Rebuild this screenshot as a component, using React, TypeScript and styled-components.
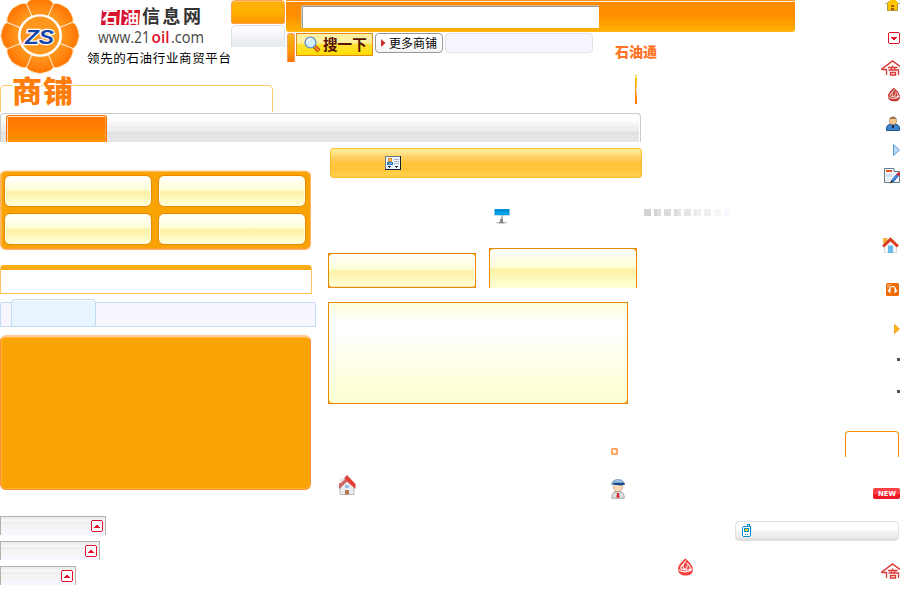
import React from "react";
import styled, { createGlobalStyle, css } from "styled-components";

const Global = createGlobalStyle`
  * { box-sizing: border-box; }
  body { margin: 0; background: #fff; font-family: "Noto Sans CJK SC", sans-serif; }
`;

const cjk = '"Noto Sans CJK SC", sans-serif';

/* ---------- page frame ---------- */
const Page = styled.div`
  width: 900px;
  height: 600px;
  overflow: hidden;
  display: flex;
  flex-direction: column;
  background: #fff;
`;
const Top = styled.header`
  display: flex;
  height: 142px;
  flex: none;
`;
const TopMain = styled.div`
  width: 800px;
  display: flex;
  flex-direction: column;
`;
const TopRow = styled.div`
  display: flex;
  height: 75px;
`;
const Body = styled.main`
  display: flex;
  height: 458px;
`;
const Column = styled.section<{ $w: number; $end?: boolean }>`
  width: ${(p) => p.$w}px;
  display: flex;
  flex-direction: column;
  align-items: ${(p) => (p.$end ? "flex-end" : "flex-start")};
`;
const Slot = styled.div<{ $t?: number; $l?: number; $r?: number }>`
  display: flex;
  flex: none;
  margin: ${(p) => p.$t || 0}px ${(p) => p.$r || 0}px 0 ${(p) => p.$l || 0}px;
`;
const Icon = styled.svg`
  display: block;
  flex: none;
`;

/* ---------- header ---------- */
const Brand = styled.div`
  position: relative;
  width: 231px;
  height: 75px;
`;
const BrandArt = styled.svg`
  position: absolute;
  left: 0;
  top: 0;
  z-index: 1;
`;
const MiniTabs = styled.div`
  width: 55px;
  display: flex;
  flex-direction: column;
  gap: 1px;
`;
const MiniTab = styled.div<{ $active?: boolean }>`
  width: 54px;
  ${(p) =>
    p.$active
      ? css`
          height: 24px;
          border: 1px solid #ffa04a;
          border-radius: 4px 4px 2px 2px;
          background: linear-gradient(#ffac0a, #ffb400 45%, #ff9600);
          box-shadow: inset 0 1px #ffc860;
        `
      : css`
          height: 22px;
          border: 1px solid #d5e2ea;
          border-bottom: 0;
          border-radius: 5px 5px 0 0;
          background: linear-gradient(#fff, #f7f6ff 40%, #eceff0 70%, #e8ecee);
        `}
`;
const SearchArea = styled.div`
  display: flex;
  flex-direction: column;
  width: 509px;
`;
const SearchBar = styled.div`
  height: 32px;
  padding: 6px 0 0 16px;
  border-radius: 0 0 3px 3px;
  background: linear-gradient(#ff9326 0 1px, #fff0d8 1px 2px, #ff8a00 2px, #ff8f00 16px, #ffae00 30px, #ffb91c);
`;
const SearchInput = styled.div`
  width: 297px;
  height: 22px;
  background: #fff;
  border: solid #9c9c9c;
  border-width: 1px 0 0 1px;
  box-shadow: 0 -1px #d5b684, -1px 0 #d9c6a8;
`;
const SearchActions = styled.div`
  display: flex;
  align-items: flex-start;
  padding: 1px 0 0 1px;
  height: 43px;
`;
const Sliver = styled.i`
  width: 8px;
  height: 29px;
  margin-right: 1px;
  border-radius: 3px 3px 0 0;
  border: 1px solid #ff9a5c;
  border-bottom: 0;
  background: linear-gradient(#ffb71b, #ff9700 60%, #ff7300);
`;
const SearchButton = styled.button`
  width: 77px;
  height: 23px;
  padding: 0 0 0 7px;
  display: flex;
  align-items: center;
  gap: 2px;
  border: 1px solid #df8b1a;
  background: linear-gradient(#fff0a0 0 9px, #ffe23c 10px, #ffdc00 100%);
  color: #551000;
  font: 700 14.6px/20px ${cjk};
  white-space: nowrap;
`;
const ButtonLabel = styled.span`
  display: block;
  margin-top: -1px;
`;
const MoreButton = styled.button`
  width: 68px;
  height: 20px;
  margin-left: 2px;
  padding: 0 0 0 5px;
  display: flex;
  align-items: center;
  gap: 3px;
  border: 1px solid #999;
  border-radius: 4px;
  background: linear-gradient(#fff, #fff 50%, #f2f2f2);
  color: #000;
  font: 400 12px/18px ${cjk};
  white-space: nowrap;
`;
const SoftBox = styled.div`
  width: 148px;
  height: 20px;
  margin-left: 2px;
  border: 1px solid #e2e2e8;
  border-radius: 4px;
  background: #f7f6ff;
`;
const OilPass = styled.div`
  margin: 8px 0 0 22px;
  font: 900 14px/20px ${cjk};
  color: #ff7426;
  white-space: nowrap;
`;
const OutlineRow = styled.div`
  display: flex;
  height: 38px;
`;
const OutlinePanel = styled.div`
  width: 273px;
  height: 27px;
  margin-top: 10px;
  border: 1px solid #fdc866;
  border-bottom: 0;
  border-radius: 5px 5px 0 0;
`;
const Edge = styled.i`
  width: 2px;
  height: 29px;
  margin-left: 362px;
  background: linear-gradient(#ffae3a 0 1px, #fff2b0 1px 2px, #ffd000 3px, #f7a000 40%, #ff7200);
  clip-path: polygon(0 0, 100% 0, 100% 20%, 60% 50%, 100% 80%, 100% 100%, 0 100%);
`;
const TabBar = styled.nav`
  width: 641px;
  height: 29px;
  padding: 1px 0 0 5px;
  border: 1px solid #ccc;
  border-bottom: 0;
  border-radius: 4px 4px 0 0;
  background: linear-gradient(#fff 0 6px, #f7f7f7 8px 11px, #eeefef 12px 16px, #e9ebeb 17px 18px, #e0e1e1 18px 20px, #e5e5e5 21px);
  box-shadow: inset -1px 0 #fff;
`;
const ActiveTab = styled.div`
  width: 101px;
  height: 27px;
  border: 1px solid #ff7300;
  border-bottom: 0;
  border-radius: 3px 3px 0 0;
  box-shadow: inset 0 1px #ffe3c2, inset 1px 0 #ffd6a8, inset -1px 0 #ff9b38;
  background: linear-gradient(#ff7600, #ff7b00 35%, #ff9400);
`;

/* ---------- left column ---------- */
const QuickGrid = styled.div`
  width: 311px;
  height: 80px;
  margin-top: 28px;
  padding: 4px 3px 3px 3px;
  display: grid;
  grid-template-columns: 148px 148px;
  grid-template-rows: 32px 32px;
  column-gap: 6px;
  row-gap: 6px;
  border: 1px solid #ffb36b;
  border-top-color: #ffe3d0;
  border-radius: 6px;
  background: #faa305;
  box-shadow: inset 0 1px #ffc25e, inset 1px 0 #ffb83c, inset 0 -1px #ff9d2c;
`;
const cream = "linear-gradient(#fff, #ffffd8 45%, #fff2a8 52%, #fff4b0 65%, #ffffd0 90%)";
const QuickCell = styled.div`
  border: 1px solid #e68a00;
  border-radius: 6px;
  box-shadow: inset 0 0 0 1px #fffce8;
  background: ${cream};
`;
const TitledPanel = styled.div`
  width: 312px;
  height: 29px;
  margin-top: 15px;
  border: 1px solid #ffc15c;
  border-top: 5px solid #fdae17;
  border-radius: 4px 4px 0 0;
`;
const BlueBar = styled.div`
  width: 316px;
  height: 25px;
  margin-top: 8px;
  padding-left: 10px;
  border: 1px solid #c3dcf5;
  border-radius: 2px 2px 0 0;
  background: #f7f6ff;
`;
const BlueTab = styled.div`
  width: 85px;
  height: 27px;
  margin-top: -4px;
  border: 1px solid #c3dcf5;
  border-bottom: 0;
  border-radius: 4px 4px 0 0;
  box-shadow: inset 0 1px #fff;
  background: #e8f4ff;
`;
const OrangePanel = styled.div`
  width: 311px;
  height: 155px;
  margin-top: 8px;
  border: 1px solid #ff8f37;
  border-top: 2px solid #ffcaa2;
  border-radius: 6px;
  box-shadow: inset 1px 0 #ffb52c, inset 0 -1px #ffb52c, inset 0 1px #ffb52c;
  background: #faa305;
`;
const GreyBox = styled.div<{ $w: number; $t: number }>`
  width: ${(p) => p.$w}px;
  height: 19px;
  margin-top: ${(p) => p.$t}px;
  padding: 3px 2px 0 0;
  display: flex;
  justify-content: flex-end;
  border: 1px solid #b5b3a7;
  border-bottom: 0;
  background: linear-gradient(#ededed 0 2px, #f7f7f7 3px 5px, #eee 5px 7px, #f5f5f5 8px 13px, #f7f6ff 14px);
`;

/* ---------- centre column ---------- */
const GoldBar = styled.div`
  width: 312px;
  height: 30px;
  margin: 6px 0 0 2px;
  padding: 7px 0 0 54px;
  border: 1px solid #ffba31;
  border-radius: 3px;
  background: linear-gradient(#fff294 0, #ffe791 3px, #ffdc74 6px, #ffcf60 8px, #ffcd59 11px, #ffc53a 13px, #ffc53a 22px, #ffce47 23px);
`;
const CreamRow = styled.div`
  display: flex;
  gap: 13px;
  align-items: flex-end;
  height: 40px;
  margin-top: 24px;
`;
const CreamFrame = styled.div<{ $open?: boolean }>`
  width: 148px;
  height: ${(p) => (p.$open ? 40 : 35)}px;
  border: 1px solid #e68a00;
  ${(p) => p.$open && "border-bottom: 0;"}
  background: #f29a10;
`;
const CreamFill = styled.div<{ $open?: boolean }>`
  height: 100%;
  border-radius: ${(p) => (p.$open ? "4px 4px 0 0" : "4px")};
  box-shadow: ${(p) => (p.$open ? "none" : "inset 0 -1px #ffe9c0, inset -1px 0 #fff")};
  background: ${cream};
`;
const ContentFrame = styled.div`
  width: 300px;
  height: 102px;
  margin-top: 14px;
  border: 1px solid #e68a00;
  background: #f29a10;
`;
const ContentFill = styled.div`
  height: 100%;
  border-radius: 0 0 4px 4px;
  background: linear-gradient(#ffffdc, #fff 19%, #fff 28%, #ffffd6 88%);
`;
const IconRow = styled.div`
  display: flex;
  width: 316px;
  align-items: flex-start;
`;

/* ---------- right column ---------- */
const Dots = styled.div`
  display: flex;
  gap: 3px;
  align-self: flex-start;
  margin-top: 25px;
`;
const Dot = styled.i<{ $c: string; $w?: number }>`
  width: ${(p) => p.$w || 7}px;
  height: 7px;
  background: ${(p) => p.$c};
`;
const Bullet = styled.i<{ $t: number }>`
  width: 3px;
  height: 3px;
  margin-top: ${(p) => p.$t}px;
  background: #555;
`;
const OutlineTab = styled.div`
  width: 54px;
  height: 26px;
  margin: 38px 1px 0 0;
  border: 1px solid #ff9208;
  border-bottom: 0;
  border-radius: 4px 4px 0 0;
`;
const NewBadge = styled.div`
  width: 27px;
  height: 11px;
  margin-top: 31px;
  border-radius: 2px;
  background: linear-gradient(#fb4146 0 6px, #ed1a24 6px);
`;
const PhoneBar = styled.div`
  width: 164px;
  height: 20px;
  margin: 22px 1px 0 0;
  padding: 2px 0 0 6px;
  border: 1px solid #e1e1e1;
  border-radius: 4px;
  background: linear-gradient(#fff 0 7px, #f7f6ff 9px, #eee 11px 14px, #e6e6e6 16px, #ddd);
`;
const MarksRow = styled.div`
  display: flex;
  justify-content: space-between;
  width: 256px;
  margin-top: 17px;
  padding-left: 34px;
`;

/* ---------- drawings ---------- */
const petalShape = "M0 0 L-13.6 -32.500 Q-12 -37.500 0 -39.300 Q12 -37.500 13.600 -32.500 Z";
const BrandMark = () => (
  <BrandArt width="231" height="112" viewBox="0 0 231 112">
    <defs>
      <radialGradient id="petal" gradientUnits="userSpaceOnUse" cx="0" cy="0" r="39">
        <stop offset=".5" stopColor="#ff9d25" />
        <stop offset="1" stopColor="#ff7400" />
      </radialGradient>
    </defs>
    <g transform="translate(40 35.500) scale(1 .97)">
      {Array.from({ length: 8 }, (_, i) => (
        <path key={i} d={petalShape} transform={`rotate(${i * 45})`} fill="url(#petal)" stroke="#ffe7c4" strokeWidth="1" />
      ))}
      <circle r="22" fill="#fff" />
      <circle r="19.500" fill="#ff961e" />
    </g>
    <text x="25" y="44" textLength="29" lengthAdjust="spacingAndGlyphs" fontFamily="Liberation Sans, sans-serif" fontSize="20" fontWeight="700" fontStyle="italic" fill="#1744a5" stroke="#fff" strokeWidth="2.400" paintOrder="stroke">ZS</text>
    <text x="12" y="102" textLength="61" fontFamily={cjk} fontSize="30" fontWeight="900" fill="#ff7d0a" stroke="#fff" strokeWidth="3" paintOrder="stroke">商铺</text>
    <path d="M102 10h18l-1 15h-18zM122 10h18l-1 15h-18z" fill="#d8122c" />
    <g fontFamily={cjk}>
      <text x="102" y="23" textLength="37" fontSize="16" fontWeight="700" fill="#fff">石油</text>
      <text x="142" y="23" textLength="59" fontSize="18" fontWeight="700" fill="#333">信息网</text>
      <text x="87" y="63" textLength="144" fontSize="12.500" fill="#000">领先的石油行业商贸平台</text>
    </g>
    <g fontFamily="Open Sans, sans-serif" fontSize="15.500" fill="#444">
      <text x="98" y="43" textLength="52" lengthAdjust="spacingAndGlyphs">www.21</text>
      <text x="151.500" y="43" textLength="18" lengthAdjust="spacingAndGlyphs" fill="#e0142c" fontWeight="600">oil</text>
      <text x="171" y="43" textLength="33" lengthAdjust="spacingAndGlyphs">.com</text>
    </g>
  </BrandArt>
);
const Magnifier = () => (
  <Icon width="17" height="17" viewBox="0 0 17 17">
    <path d="M10 10l5 5" stroke="#a33c00" strokeWidth="4" />
    <path d="M10 10l5 5" stroke="#ff8a1e" strokeWidth="2.400" />
    <circle cx="6.500" cy="6.500" r="5.400" fill="#d3efff" stroke="#6894c8" strokeWidth="1.400" />
    <path d="M3.500 6a3 3 0 013-3" stroke="#fff" strokeWidth="1.500" fill="none" />
  </Icon>
);
const RedArrow = () => (
  <Icon width="5" height="8" viewBox="0 0 5 8"><path d="M0 0l4.500 4L0 8z" fill="#c9302c" /></Icon>
);
const ArrowBox = ({ down }: { down?: boolean }) => (
  <Icon width="12" height="12" viewBox="0 0 12 12" shapeRendering="crispEdges">
    <path d="M1 0h10v1h1v10h-1v1H1v-1H0V1h1z" fill="#e8112d" />
    <path d="M1 1h10v10H1z" fill="#fff" />
    <path d={down ? "M3 5h6v1H8v1H7v1H5V7H4V6H3z" : "M3 8h6V7H8V6H7V5H5v1H4v1H3z"} fill="#e8112d" />
  </Icon>
);
const YellowHouse = () => (
  <Icon width="15" height="11" viewBox="0 0 15 11" shapeRendering="crispEdges">
    <path d="M6 0h3l5 3h1v1H0V3h1z" fill="#aaa" />
    <path d="M5 0h5l3 3v7H2V3z" fill="#ffc400" />
    <path d="M2.500 4v6M12.500 4v6M2 10.500h11" stroke="#b39a45" />
    <path d="M6 5h3v2H6zM6 8h3v2H6z" fill="#a55a00" />
  </Icon>
);
const ShopHouse = () => (
  <Icon width="19" height="16" viewBox="0 0 19 16" fill="none" stroke="#dc3a38">
    <path d="M.3 9.500L11.500 1 19 6.500" strokeWidth="1.500" />
    <path d="M.5 9.500h5V15M7 7.500h9.500M11.500 5.500v2M7.500 10h10V15M10 8l1 2M14 8l-1 2M9.500 12.500h5v2.500h-5z" strokeWidth="1.300" />
  </Icon>
);
const Knot = ({ w = 14, h = 16, c = "#c53932" }: { w?: number; h?: number; c?: string }) => (
  <Icon width={w} height={h} viewBox="0 0 14 16">
    <path d="M6.800 0C9.500 2 14 6.500 14 10.500S10.600 16 7 16s-7-2-7-6S4 2.500 6.800 0z" fill={c} />
    <path d="M7.500 2C4.500 5 4 8 5.500 9.500S9 9 8.500 6.500M8 4.500c3.500 2 4 4 3 6.500M5 5C1.500 8 2 10.500 5.500 10.500S8 12 13 9.500M.5 10.500C3 13 9 13.500 13.500 10.500" stroke="#fff" strokeWidth="1" fill="none" />
  </Icon>
);
const Person = () => (
  <Icon width="14" height="15" viewBox="0 0 14 15">
    <path d="M.5 14.500V12c0-2 1.500-3.500 4.500-4h4c3 .5 4.500 2 4.500 4v2.500z" fill="#3f83c8" stroke="#215693" />
    <circle cx="7" cy="4.800" r="3.700" fill="#f7c98c" stroke="#b28a60" strokeWidth=".7" />
    <path d="M3.500 3C4.500-.5 9.500-.5 10.500 3z" fill="#9c7652" />
    <path d="M6 9h2v3H6z" fill="#182a4a" />
  </Icon>
);
const Play = ({ gold }: { gold?: boolean }) => (
  <Icon width={gold ? 6 : 7} height={gold ? 10 : 12} viewBox="0 0 7 12" preserveAspectRatio="none">
    <path d="M.5 .5v11L6.500 6z" fill={gold ? "#ffb51c" : "#b5dbf8"} stroke={gold ? "#ed960a" : "#5f98cd"} />
  </Icon>
);
const Form = () => (
  <Icon width="16" height="16" viewBox="0 0 16 16">
    <path d="M.5 14.500V.5h9.500v3h5.500v11z" fill="#f3f8fd" stroke="#657e8c" />
    <path d="M2 2h6v2H2z" fill="#e85320" />
    <path d="M2 6h6v3H2z" fill="#cfe0fa" />
    <path d="M2 10.500h4M2 12.500h3" stroke="#e2e9f2" />
    <path d="M14.500 6L8 13.500" stroke="#1762b9" strokeWidth="2.800" />
    <path d="M13.500 7L8.500 12.500" stroke="#6db8f5" strokeWidth="1" />
    <path d="M15.500 5L13.500 7.300" stroke="#e72634" strokeWidth="3" />
    <path d="M7 12.300l2 1.500-3 1.700z" fill="#542c0e" />
  </Icon>
);
const RoofHome = () => (
  <Icon width="17" height="16" viewBox="0 0 17 16">
    <path d="M1 1h4.500v5H1z" fill="#f9b545" />
    <path d="M2.500 15.700V9l6-6 6 6v6.700z" fill="#f4f6fa" stroke="#c9cfd8" strokeWidth=".8" />
    <path d="M1 9.500L8.500 2.300 16 9.500" stroke="#d83b1d" strokeWidth="3" fill="none" />
    <path d="M6 8.500h5V16H6z" fill="#65bbed" />
  </Icon>
);
const Headset = () => (
  <Icon width="13" height="13" viewBox="0 0 13 13">
    <rect width="13" height="13" rx="1.500" fill="#ee6b06" />
    <path d="M1 6V1h5z" fill="#ff9b58" />
    <path d="M3.500 7q0-3.500 3-3.500t3 3.500" stroke="#fff" strokeWidth="1.200" fill="none" />
    <path d="M4.500 5v5.500L1.500 7.800zM8.500 5v5.500l3-2.700z" fill="#fff" />
  </Icon>
);
const Card = () => (
  <Icon width="16" height="14" viewBox="0 0 16 14" shapeRendering="crispEdges">
    <path d="M0 0h16v14H0z" fill="#102030" />
    <path d="M0 0h15v1H1v12H0z" fill="#6b7885" />
    <path d="M1 1h14v12H1z" fill="#eef4fd" />
    <path d="M3 2h4v4H3z" fill="#e68a22" /><path d="M4 3h2v2H4z" fill="#ffc57b" />
    <path d="M2 6h6v3H2z" fill="#2879bf" /><path d="M4 7h3v1H4z" fill="#8cc6f2" />
    <path d="M9 3.500h5M9 5.500h5M9 7.500h5" stroke="#a9b4c9" />
    <path d="M3 10h3v1H5v1H4v-1H3zM10 10h3v1h-1v1h-1v-1h-1z" fill="#334" />
  </Icon>
);
const Sign = () => (
  <Icon width="16" height="15" viewBox="0 0 16 15">
    <ellipse cx="7.500" cy="13.800" rx="6" ry="1" fill="#ccc" />
    <ellipse cx="7.500" cy="13.500" rx="3" ry=".8" fill="#888" />
    <path d="M7 6h2v4H7z" fill="#bbb" /><path d="M6 10h3v4H6z" fill="#888" />
    <path d="M0 0h16v6.500H0z" fill="#8fbedb" /><path d="M1 0h14v6H1z" fill="#00a3e5" /><path d="M1 0h14v3H1z" fill="#008fd5" />
  </Icon>
);
const RedHouse = () => (
  <Icon width="18" height="20" viewBox="0 0 18 20">
    <path d="M2 11l7-6 7 6v8.500H2z" fill="#e9ebee" stroke="#aaa" strokeWidth=".8" />
    <path d="M9 0l8.500 9v5L9 6.500 1 14V9z" fill="#e34038" />
    <path d="M1 9l6-6.500L9 6.500 1 14z" fill="#cf6a68" />
    <path d="M2 3h4.500v1.500L3 8H2z" fill="#eee5e5" />
    <path d="M7 10h4v3H7z" fill="#9cc3e6" /><path d="M7 15h4v4.500H7z" fill="#b57650" />
  </Icon>
);
const Officer = () => (
  <Icon width="14" height="20" viewBox="0 0 14 20">
    <path d="M.7 19.300q0-6 4.300-7h4q4.300 1 4.300 7z" fill="#dcdee2" stroke="#999" strokeWidth=".8" />
    <circle cx="7" cy="7.800" r="4.700" fill="#ffdcb6" stroke="#b58a6a" strokeWidth=".6" />
    <path d="M.5 5.500q1-5 6.500-5t6.500 5z" fill="#9cc0e0" stroke="#587b9d" strokeWidth=".6" />
    <path d="M1.500 3.800h12v2l-4 .8-6-.8z" fill="#15468d" />
    <path d="M4.500 13.500L7 15l2.500-1.500" stroke="#888" strokeWidth=".7" fill="none" />
    <path d="M6.200 14h1.600l.8 4L7 19.300 5.400 18z" fill="#d62b35" />
  </Icon>
);
const Ring = () => (
  <Icon width="7" height="7" viewBox="0 0 7 7">
    <rect width="7" height="7" rx="1.500" fill="#ff9f58" />
    <circle cx="3.500" cy="3.500" r="2" fill="#fff6e4" />
  </Icon>
);
const NewLabel = () => (
  <Icon width="27" height="11" viewBox="0 0 27 11">
    <text x="5" y="8" textLength="18" lengthAdjust="spacingAndGlyphs" fontFamily="DejaVu Sans, sans-serif" fontSize="7" fontWeight="700" fill="#fff">NEW</text>
  </Icon>
);
const Phone = () => (
  <Icon width="9" height="13" viewBox="0 0 9 13" shapeRendering="crispEdges">
    <path d="M5 0h3v2h1v10H8v1H1v-1H0V3h1V2h4z" fill="#0d8dd0" />
    <path d="M6 1h1v1H6zM1 3h7v9H1z" fill="#fff" />
    <path d="M2 4h5v4H2z" fill="#0d8dd0" /><path d="M3 5h3v2H3z" fill="#ffd200" />
    <path d="M3 10h1v1H3zM5 10h1v1H5z" fill="#0d8dd0" />
  </Icon>
);

const dotColours = ["#d3d3d3", "linear-gradient(90deg,#d3d3d3 3px,#dedede 3px)", "#dcdcdc", "linear-gradient(90deg,#dadada 3px,#e5e5e5 3px)", "#e5e5e5", "linear-gradient(90deg,#e2e2e2 1px,#edf0f0 1px)", "#edefef", "#f6f6f6", "#f7f6ff"];

export default function App() {
  return (
    <Page>
      <Global />
      <Top>
        <TopMain>
          <TopRow>
            <Brand><BrandMark /></Brand>
            <MiniTabs>
              <MiniTab $active />
              <MiniTab />
            </MiniTabs>
            <SearchArea>
              <SearchBar><SearchInput /></SearchBar>
              <SearchActions>
                <Sliver />
                <SearchButton><Magnifier /><ButtonLabel>搜一下</ButtonLabel></SearchButton>
                <MoreButton><RedArrow /><ButtonLabel>更多商铺</ButtonLabel></MoreButton>
                <SoftBox />
                <OilPass>石油通</OilPass>
              </SearchActions>
            </SearchArea>
          </TopRow>
          <OutlineRow>
            <OutlinePanel />
            <Edge />
          </OutlineRow>
          <TabBar><ActiveTab /></TabBar>
        </TopMain>
        <Column $w={100} $end>
          <Slot><YellowHouse /></Slot>
          <Slot $t={21}><ArrowBox down /></Slot>
          <Slot $t={16}><ShopHouse /></Slot>
          <Slot $t={11}><Knot w={12} h={15} /></Slot>
          <Slot $t={14}><Person /></Slot>
        </Column>
      </Top>
      <Body>
        <Column $w={328}>
          <QuickGrid><QuickCell /><QuickCell /><QuickCell /><QuickCell /></QuickGrid>
          <TitledPanel />
          <BlueBar><BlueTab /></BlueBar>
          <OrangePanel />
          <GreyBox $w={106} $t={26}><ArrowBox /></GreyBox>
          <GreyBox $w={100} $t={6}><ArrowBox /></GreyBox>
          <GreyBox $w={76} $t={6}><ArrowBox /></GreyBox>
        </Column>
        <Column $w={316}>
          <GoldBar><Card /></GoldBar>
          <Slot $t={31} $l={166}><Sign /></Slot>
          <CreamRow>
            <CreamFrame><CreamFill /></CreamFrame>
            <CreamFrame $open><CreamFill $open /></CreamFrame>
          </CreamRow>
          <ContentFrame><ContentFill /></ContentFrame>
          <Slot $t={44} $l={283}><Ring /></Slot>
          <IconRow>
            <Slot $t={20} $l={10}><RedHouse /></Slot>
            <Slot $t={24} $l={255}><Officer /></Slot>
          </IconRow>
        </Column>
        <Column $w={256} $end>
          <Slot $t={2}><Play /></Slot>
          <Slot $t={12}><Form /></Slot>
          <Dots>
            {dotColours.map((c, i) => <Dot key={i} $c={c} $w={i === 8 ? 5 : 7} />)}
          </Dots>
          <Slot $t={21} $r={1}><RoofHome /></Slot>
          <Slot $t={30} $r={1}><Headset /></Slot>
          <Slot $t={28}><Play gold /></Slot>
          <Bullet $t={24} />
          <Bullet $t={29} />
          <OutlineTab />
          <NewBadge><NewLabel /></NewBadge>
          <PhoneBar><Phone /></PhoneBar>
          <MarksRow>
            <Knot w={15} h={18} c="#f2413d" />
            <Slot $t={5}><ShopHouse /></Slot>
          </MarksRow>
        </Column>
      </Body>
    </Page>
  );
}
